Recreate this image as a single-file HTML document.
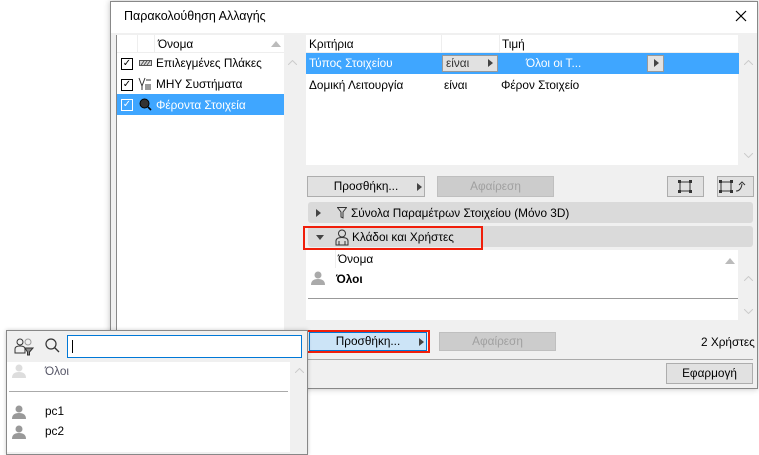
<!DOCTYPE html><html><head><style>
*{box-sizing:border-box;margin:0;padding:0}
body{width:759px;height:451px;background:#fff;position:relative;overflow:hidden;font-family:"Liberation Sans","DejaVu Sans",sans-serif;font-size:11.8px;color:#000}
.a{position:absolute}
.btn{position:absolute;background:#e1e1e1;border:1px solid #adadad;text-align:center;line-height:19px;font-size:11.8px}
.dis{color:#a0a0a0;background:#ccc;border-color:#bfbfbf}
.tri{position:absolute;width:0;height:0;border-top:4px solid transparent;border-bottom:4px solid transparent;border-left:5px solid #444}
.cb{position:absolute;width:12px;height:12px;border:1px solid #000;background:#fff;font-size:10px;line-height:10px;text-align:center;font-weight:bold}
.sec{position:absolute;left:308px;width:445px;height:21px;background:#dadada;border-radius:3px}
.usr{position:absolute;width:14px;height:14px}
</style></head><body>
<div class="a" style="left:110px;top:1px;width:648px;height:388px;border:1px solid #888;background:#f0f0f0;box-shadow:0 0 6px rgba(0,0,0,.25)"></div>
<div class="a" style="left:111px;top:2px;width:646px;height:31px;background:#fff"></div>
<div class="a" style="left:124px;top:9px;font-size:12.5px">Παρακολούθηση Αλλαγής</div>
<svg class="a" style="left:735px;top:10px" width="12" height="12"><path d="M1 1L11 11M11 1L1 11" stroke="#000" stroke-width="1.2"/></svg>
<div class="a" style="left:116px;top:35px;width:168px;height:300px;background:#fff;border-left:1px solid #888"></div>
<div class="a" style="left:117px;top:35px;width:167px;height:18px;border-bottom:1px solid #eee"></div>
<div class="a" style="left:137px;top:35px;width:1px;height:18px;background:#eee"></div>
<div class="a" style="left:154px;top:35px;width:1px;height:18px;background:#eee"></div>
<div class="a" style="left:158px;top:37px">Όνομα</div>
<svg class="a" style="left:271px;top:41px" width="10" height="6"><path d="M0 6L5 0L10 6Z" fill="#bbb"/></svg>
<div class="a" style="left:284px;top:35px;width:17px;height:295px;background:#f0f0f0"></div>
<svg class="a" style="left:288px;top:60px" width="9" height="5"><path d="M0 5L4.5 0.5L9 5" stroke="#ccc" fill="none"/></svg>
<div class="cb" style="left:121px;top:58px">✓</div>
<svg class="a" style="left:139px;top:60px" width="13" height="6"><rect x=".5" y=".5" width="12" height="5" fill="#ddd" stroke="#555"/><path d="M2 5L5 1M5 5L8 1M8 5L11 1" stroke="#555"/></svg>
<div class="a" style="left:156px;top:56px">Επιλεγμένες Πλάκες</div>
<div class="cb" style="left:121px;top:79px">✓</div>
<svg class="a" style="left:138px;top:77px" width="14" height="14"><path d="M1 1L4 9L7 1M4 9V13" stroke="#333" fill="none"/><rect x="7" y="7" width="6" height="6" fill="#999"/><path d="M8 3H13" stroke="#333"/></svg>
<div class="a" style="left:156px;top:77px">ΜΗΥ Συστήματα</div>
<div class="a" style="left:117px;top:94px;width:167px;height:21px;background:#3fa6ff"></div>
<div class="cb" style="left:121px;top:99px;border-color:#fff;background:#3fa6ff;color:#fff">✓</div>
<svg class="a" style="left:139px;top:98px" width="13" height="13"><circle cx="5.5" cy="5.5" r="4.5" fill="#333" stroke="#000"/><path d="M9 9L12 12" stroke="#000" stroke-width="1.6"/></svg>
<div class="a" style="left:156px;top:98px;color:#fff">Φέροντα Στοιχεία</div>
<div class="a" style="left:306px;top:35px;width:432px;height:130px;background:#fff"></div>
<div class="a" style="left:306px;top:35px;width:432px;height:18px;border-bottom:1px solid #eee"></div>
<div class="a" style="left:441px;top:35px;width:1px;height:18px;background:#eee"></div>
<div class="a" style="left:499px;top:35px;width:1px;height:18px;background:#eee"></div>
<div class="a" style="left:309px;top:37px">Κριτήρια</div>
<div class="a" style="left:502px;top:37px">Τιμή</div>
<div class="a" style="left:306px;top:53px;width:433px;height:21px;background:#3fa6ff"></div>
<div class="a" style="left:309px;top:56px;color:#fff">Τύπος Στοιχείου</div>
<div class="a" style="left:442px;top:55px;width:56px;height:17px;background:#e1e1e1;border:1px solid #999"></div>
<div class="a" style="left:446px;top:56px;color:#333">είναι</div>
<div class="tri" style="left:488px;top:59px"></div>
<div class="a" style="left:526px;top:56px;color:#fff">Όλοι οι Τ...</div>
<div class="a" style="left:647px;top:55px;width:17px;height:17px;background:#e1e1e1;border:1px solid #999"></div>
<div class="tri" style="left:654px;top:59px"></div>
<div class="a" style="left:309px;top:78px">Δομική Λειτουργία</div>
<div class="a" style="left:444px;top:78px">είναι</div>
<div class="a" style="left:501px;top:78px">Φέρον Στοιχείο</div>
<svg class="a" style="left:744px;top:60px" width="9" height="5"><path d="M0 5L4.5 .5L9 5" stroke="#ccc" fill="none"/></svg>
<svg class="a" style="left:744px;top:153px" width="9" height="5"><path d="M0 0L4.5 4.5L9 0" stroke="#ccc" fill="none"/></svg>
<div class="btn" style="left:307px;top:176px;width:118px;height:21px">Προσθήκη...</div>
<div class="tri" style="left:417px;top:183px"></div>
<div class="btn dis" style="left:437px;top:176px;width:117px;height:21px">Αφαίρεση</div>
<div class="btn" style="left:667px;top:176px;width:37px;height:21px"></div>
<svg class="a" style="left:678px;top:180px" width="14" height="13"><rect x="2" y="2" width="10" height="9" fill="none" stroke="#333"/><g fill="#333"><rect x="0" y="0" width="3" height="3"/><rect x="11" y="0" width="3" height="3"/><rect x="0" y="10" width="3" height="3"/><rect x="11" y="10" width="3" height="3"/></g></svg>
<div class="btn" style="left:717px;top:176px;width:37px;height:21px"></div>
<svg class="a" style="left:719px;top:180px" width="32" height="13"><rect x="2" y="2" width="10" height="9" fill="none" stroke="#333"/><g fill="#333"><rect x="0" y="0" width="3" height="3"/><rect x="11" y="0" width="3" height="3"/><rect x="0" y="10" width="3" height="3"/><rect x="11" y="10" width="3" height="3"/></g><path d="M17 11Q22 11 23 4M20 5L23 2L26 5" stroke="#333" fill="none"/></svg>
<div class="sec" style="top:202px"></div>
<div class="tri" style="left:316px;top:209px"></div>
<svg class="a" style="left:337px;top:207px" width="10" height="12"><path d="M.5 .5H9.5L6 5V11L4 10V5Z" fill="none" stroke="#333"/></svg>
<div class="a" style="left:351px;top:206px">Σύνολα Παραμέτρων Στοιχείου (Μόνο 3D)</div>
<div class="sec" style="top:226px"></div>
<div class="a" style="left:316px;top:235px;border-left:4px solid transparent;border-right:4px solid transparent;border-top:5px solid #444"></div>
<svg class="a" style="left:335px;top:229px" width="14" height="17"><circle cx="7" cy="4.5" r="3.5" fill="none" stroke="#333"/><path d="M1 16V12Q1 8.5 7 8.5Q13 8.5 13 12V16Z M4 16V12M10 16V12" fill="none" stroke="#333"/></svg>
<div class="a" style="left:352px;top:230px">Κλάδοι και Χρήστες</div>
<div class="a" style="left:303px;top:226px;width:180px;height:24px;border:2px solid #f01e0a"></div>
<div class="a" style="left:306px;top:250px;width:432px;height:70px;background:#fff"></div>
<div class="a" style="left:335px;top:250px;width:403px;height:18px;border-left:1px solid #eee;background:#fff"></div>
<div class="a" style="left:338px;top:252px">Όνομα</div>
<svg class="a" style="left:725px;top:258px" width="10" height="6"><path d="M0 6L5 0L10 6Z" fill="#bbb"/></svg>
<svg class="usr" style="left:311px;top:271px"><circle cx="7" cy="4" r="3.5" fill="#aaa"/><path d="M0 14Q0 8 7 8Q14 8 14 14Z" fill="#aaa"/></svg>
<div class="a" style="left:336px;top:272px;font-weight:bold">Όλοι</div>
<div class="a" style="left:308px;top:298px;width:430px;height:1px;background:#999"></div>
<svg class="a" style="left:744px;top:276px" width="9" height="5"><path d="M0 5L4.5 .5L9 5" stroke="#ccc" fill="none"/></svg>
<svg class="a" style="left:744px;top:309px" width="9" height="5"><path d="M0 0L4.5 4.5L9 0" stroke="#ccc" fill="none"/></svg>
<div class="btn" style="left:309px;top:332px;width:118px;height:19px;background:#cce4f7;border-color:#0078d7;line-height:17px">Προσθήκη...</div>
<div class="tri" style="left:419px;top:338px"></div>
<div class="a" style="left:306px;top:330px;width:124px;height:23px;border:2px solid #f01e0a"></div>
<div class="btn dis" style="left:439px;top:332px;width:117px;height:19px;line-height:17px">Αφαίρεση</div>
<div class="a" style="left:701px;top:335px">2 Χρήστες</div>
<div class="a" style="left:308px;top:359px;width:445px;height:1px;background:#aaa"></div>
<div class="btn" style="left:666px;top:363px;width:87px;height:21px">Εφαρμογή</div>
<div class="a" style="left:6px;top:330px;width:302px;height:125px;background:#f0f0f0;border:1px solid #888;box-shadow:0 0 4px rgba(0,0,0,.2)"></div>
<div class="a" style="left:7px;top:362px;width:283px;height:90px;background:#fff"></div>
<svg class="a" style="left:14px;top:338px" width="20" height="18"><circle cx="6" cy="4" r="3" fill="none" stroke="#333"/><path d="M1 15V11Q1 8 6 8Q11 8 11 11V15Z" fill="none" stroke="#333"/><circle cx="14" cy="4" r="3" fill="none" stroke="#999"/><path d="M11 10H19L15.5 14V17H13.5V14Z" fill="#888" stroke="#333"/></svg>
<svg class="a" style="left:45px;top:338px" width="15" height="15"><circle cx="6" cy="6" r="5" fill="none" stroke="#333" stroke-width="1.2"/><path d="M9.5 9.5L14 14" stroke="#333" stroke-width="1.3"/></svg>
<div class="a" style="left:67px;top:335px;width:235px;height:23px;background:#fff;border:1px solid #0078d7"></div>
<div class="a" style="left:72px;top:340px;width:1px;height:13px;background:#000"></div>
<svg class="a" style="left:295px;top:368px" width="9" height="5"><path d="M0 5L4.5 .5L9 5" stroke="#ccc" fill="none"/></svg>
<svg class="usr" style="left:12px;top:364px"><circle cx="7" cy="4" r="3.5" fill="#ddd"/><path d="M0 14Q0 8 7 8Q14 8 14 14Z" fill="#ddd"/></svg>
<div class="a" style="left:45px;top:364px;color:#556">Όλοι</div>
<div class="a" style="left:9px;top:391px;width:279px;height:1px;background:#aaa"></div>
<svg class="usr" style="left:12px;top:405px"><circle cx="7" cy="4" r="3.5" fill="#999"/><path d="M0 14Q0 8 7 8Q14 8 14 14Z" fill="#999"/></svg>
<div class="a" style="left:45px;top:404px">pc1</div>
<svg class="usr" style="left:12px;top:425px"><circle cx="7" cy="4" r="3.5" fill="#999"/><path d="M0 14Q0 8 7 8Q14 8 14 14Z" fill="#999"/></svg>
<div class="a" style="left:45px;top:424px">pc2</div>
</body></html>
